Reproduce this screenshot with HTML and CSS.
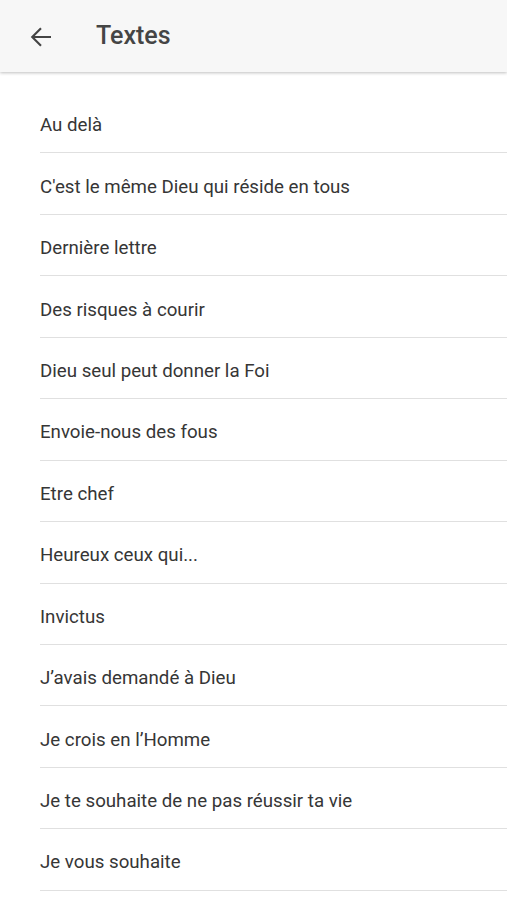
FILE: index.html
```html
<!DOCTYPE html>
<html>
<head>
  <title>Textes</title>
  <link rel="stylesheet" href="styles.css">
  <meta charset="utf-8">
  <meta name="viewport" content="width=device-width">
</head>

<body lang="fr">
  <header class="topbar">
    <button class="back" title="Retour">
      <svg width="30" height="30" viewBox="0 0 24 24"><path d="M20 12H5M12 5l-7 7 7 7" fill="none" stroke="currentColor" stroke-width="1.7"/></svg>
    </button>
    <h1>Textes</h1>
  </header>
  <ul class="list">
    <li>Au delà</li>
    <li>C'est le même Dieu qui réside en tous</li>
    <li>Dernière lettre</li>
    <li>Des risques à courir</li>
    <li>Dieu seul peut donner la Foi</li>
    <li>Envoie-nous des fous</li>
    <li>Etre chef</li>
    <li>Heureux ceux qui...</li>
    <li>Invictus</li>
    <li>J’avais demandé à Dieu</li>
    <li>Je crois en l’Homme</li>
    <li>Je te souhaite de ne pas réussir ta vie</li>
    <li>Je vous souhaite</li>
  </ul>
</body>
</html>
```

FILE: styles.css
```css
body {
  margin: 0;
  background: #fff;
  font-family: Roboto, "Noto Sans", sans-serif;
  color: #333;
  overflow: hidden;
}

.topbar {
  display: flex;
  align-items: center;
  height: 72px;
  background: #f7f7f7;
  box-shadow: 0 1px 3px rgba(0,0,0,0.25);
  position: relative;
  z-index: 1;
}
.back {
  border: none;
  background: none;
  padding: 0;
  margin: 1px 0 0 26px;
  width: 30px;
  height: 30px;
  color: #444;
  cursor: pointer;
}
.back svg {display: block;}
.topbar h1 {
  margin: 0 0 1px 40px;
  font-size: 25px;
  font-weight: 500;
  color: #454545;
}

.list {
  list-style: none;
  margin: 0;
  padding: 20px 0 0 40px;
}
.list li {
  height: 61.45px;
  box-sizing: border-box;
  display: flex;
  align-items: center;
  padding-top: 6px;
  border-bottom: 1px solid #e0e0e0;
  font-size: 18.7px;
  color: #363636;
}
```
